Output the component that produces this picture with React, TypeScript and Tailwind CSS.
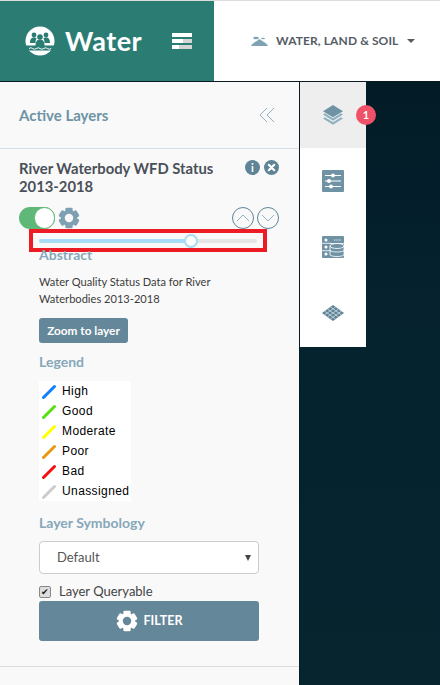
import React from "react";

const FONT = { fontFamily: '"Lato", "Noto Sans", sans-serif' };

function Gear({ size, color, hole }: { size: number; color: string; hole: string }) {
  const teeth = [0, 60, 120];
  return (
    <svg width={size} height={size} viewBox="0 0 24 24">
      {teeth.map((a) => (
        <rect key={a} x="8" y="0.8" width="8" height="22.4" rx="1.500" fill={color} transform={`rotate(${a} 12 12)`} />
      ))}
      <circle cx="12" cy="12" r="8.800" fill={color} />
      <circle cx="12" cy="12" r="4.600" fill={hole} />
    </svg>
  );
}

function Logo() {
  return (
    <svg width="30" height="30" viewBox="0 0 30 30">
      <circle cx="15" cy="15" r="14.500" fill="#fff" />
      <g fill="#2b7d74">
        <circle cx="9" cy="9" r="2.400" />
        <circle cx="21" cy="9" r="2.400" />
        <path d="M5 17c0-4 1.500-5.500 4-5.500 1.200 0 2 .3 2.700 1-.9 1-1.200 2.500-1.200 4.500z" />
        <path d="M25 17c0-4-1.500-5.500-4-5.500-1.200 0-2 .3-2.700 1 .9 1 1.200 2.500 1.200 4.500z" />
        <circle cx="15" cy="11" r="2.800" />
        <path d="M10.500 20c0-4.500 1.500-6.500 4.500-6.500s4.500 2 4.500 6.500z" />
        <path d="M0.500 19.500h29a14.500 14.500 0 0 1-2 5H2.500a14.500 14.500 0 0 1-2-5z" />
      </g>
      <path d="M4 22.500q2-1.500 3.700 0t3.700 0 3.700 0 3.700 0 3.700 0 3.700 0" fill="none" stroke="#fff" strokeWidth="1" />
    </svg>
  );
}

function Layers() {
  return (
    <svg width="22" height="20" viewBox="0 0 22 20">
      <path d="M11 0l10 6.200-10 6-10-6z" fill="#6f93a5" />
      <path d="M1 9.500l2-1.200 8 4.900 8-4.900 2 1.200-10 6.200z" fill="#8fb0c0" />
      <path d="M1 13.500l2-1.200 8 4.900 8-4.900 2 1.200-10 6.200z" fill="#8fb0c0" />
    </svg>
  );
}

function Sliders() {
  return (
    <svg width="22" height="22" viewBox="0 0 22 22">
      <rect width="22" height="22" rx="1" fill="#6f93a5" />
      <g stroke="#fff" strokeWidth="1">
        <path d="M3 5.500h16M3 11h16M3 16.500h16" />
      </g>
      <g fill="#fff">
        <circle cx="11" cy="5.500" r="2" />
        <circle cx="7" cy="11" r="2" />
        <circle cx="9" cy="16.500" r="2" />
      </g>
    </svg>
  );
}

function Database() {
  return (
    <svg width="22" height="22" viewBox="0 0 22 22">
      <rect width="22" height="22" rx="1" fill="#6f93a5" />
      <g stroke="#fff" strokeWidth="0.800" fill="none">
        <path d="M0 7.300h9M0 14.700h9M8 7.500h14" />
        <ellipse cx="15" cy="10" rx="7" ry="2.500" />
        <path d="M8 10v9M22 10v9M8 14.500c2 2 12 2 14 0M8 19c2 2 12 2 14 0" />
        <path d="M12 4h7" strokeDasharray="1 0.600" />
      </g>
      <g fill="#fff">
        <circle cx="4" cy="4" r="1.500" />
        <circle cx="4" cy="11" r="1.500" />
        <circle cx="4" cy="18" r="1.500" />
      </g>
    </svg>
  );
}

function Grid() {
  return (
    <svg width="22" height="16" viewBox="0 0 22 16">
      <path d="M11 0l11 8-11 8-11-8z" fill="#5f8496" />
      <g stroke="#cfdce3" strokeWidth="0.800">
        <path d="M5.500 4l11 8M2.500 6l11 8M8.500 2l11 8M16.500 4l-11 8M19.500 6l-11 8M13.500 2l-11 8" />
      </g>
    </svg>
  );
}

function Legend({ color, label }: { color: string; label: string }) {
  return (
    <div className="flex h-5 items-center">
      <svg width="16" height="16" viewBox="0 0 16 16" className="ml-[2px]">
        <path d="M2.500 14.500L13.500 3.500" stroke={color} strokeWidth="3" strokeLinecap="round" />
      </svg>
      <span className="ml-[5px] text-[12px] tracking-[0.4px] text-black" style={{ fontFamily: '"Liberation Sans", sans-serif' }}>
        {label}
      </span>
    </div>
  );
}

function Circle({ up }: { up?: boolean }) {
  return (
    <span className="flex h-[22px] w-[22px] items-center justify-center rounded-full border border-[#5f8496]">
      <svg width="14" height="8" viewBox="0 0 14 8">
        <path d={up ? "M1 7l6-6 6 6" : "M1 1l6 6 6-6"} fill="none" stroke="#8fb0c0" strokeWidth="1" />
      </svg>
    </span>
  );
}

const heading = "text-[14px] font-bold text-[#86a8b9]";

export default function App() {
  return (
    <div className="flex h-[685px] w-[440px] flex-col overflow-hidden bg-[#06252f]" style={FONT}>
      <header className="flex h-[82px] shrink-0 border-t border-b border-t-[#dddddd] border-b-[#0a1a22] bg-white">
        <div className="flex w-[214px] items-center bg-[#2b7d74] pl-[25px]">
          <Logo />
          <span className="ml-[10px] text-[27px] font-bold tracking-[0.5px] text-white">Water</span>
          <span className="ml-[30px] flex w-5 flex-col gap-[2px]">
            <span className="h-1 bg-white" />
            <span className="h-1 bg-[linear-gradient(100deg,#fff_55%,#d5d5d5_55%)]" />
            <span className="h-1 bg-[linear-gradient(100deg,#fff_35%,#d5d5d5_35%)]" />
          </span>
        </div>
        <div className="flex flex-1 items-center pl-[37px]">
          <svg width="17" height="10" viewBox="0 0 17 10">
            <path d="M0 10c1-2 3-3.500 5-4.500L8.500 3 12 5.500c2 1 4 2.500 5 4.500z" fill="#7fa3b5" />
            <ellipse cx="5" cy="2" rx="2.800" ry="1.300" fill="#7fa3b5" />
            <ellipse cx="12" cy="2.500" rx="2" ry="0.800" fill="#7fa3b5" />
          </svg>
          <span className="ml-2 text-[12px] font-bold tracking-[0.1px] text-[#555c66]">WATER, LAND &amp; SOIL</span>
          <span className="ml-[9px] h-0 w-0 border-x-[4px] border-t-[4px] border-x-transparent border-t-[#555c66]" />
        </div>
      </header>
      <div className="flex min-h-0 flex-1">
        <aside className="flex w-[300px] shrink-0 flex-col border-r border-[#0a1a22] bg-[#f9f9f9]">
          <div className="flex h-[67px] shrink-0 items-center justify-between border-b border-[#d5e0e6] pl-[19px] pr-[24px]">
            <span className="text-[15px] font-bold text-[#6d93a6]">Active Layers</span>
            <svg width="16" height="16" viewBox="0 0 16 16">
              <path d="M8 1L1 8l7 7M15 1L8 8l7 7" fill="none" stroke="#8fb0c0" strokeWidth="1" />
            </svg>
          </div>
          <div className="flex flex-1 flex-col border-b border-[#dddddd] pl-[19px] pr-[20px]">
            <div className="mt-[10px] flex items-start justify-between">
              <h2 className="w-[210px] text-[14.800px] leading-[18px] font-bold text-[#4a5058]">River Waterbody WFD Status 2013-2018</h2>
              <div className="mt-[1px] flex gap-[4px]">
                <span className="flex h-[15px] w-[15px] items-center justify-center rounded-full bg-[#5f8496] text-[11px] leading-none font-bold text-white">i</span>
                <svg width="15" height="15" viewBox="0 0 15 15">
                  <circle cx="7.500" cy="7.500" r="7.500" fill="#5f8496" />
                  <path d="M4.800 4.800l5.400 5.400M10.200 4.800l-5.400 5.400" stroke="#fff" strokeWidth="2.200" strokeLinecap="round" />
                </svg>
              </div>
            </div>
            <div className="mt-[12px] flex items-center justify-between">
              <div className="flex items-center gap-[3px]">
                <span className="flex h-[22px] w-9 items-center justify-end rounded-full bg-[#5fb878]">
                  <span className="h-[22px] w-[21px] rounded-full border border-[#5fb878] bg-white" />
                </span>
                <Gear size={22} color="#7fa0b2" hole="#f9f9f9" />
              </div>
              <div className="flex gap-[3px]">
                <Circle up />
                <Circle />
              </div>
            </div>
            <div className="ml-[10px] flex h-[23px] w-[238px] shrink-0 items-center border-4 border-[#ed1c24] px-[6px]">
              <div className="relative h-1 w-full rounded-full bg-[#e6e6e6]">
                <div className="h-1 w-[150px] rounded-full bg-[#a6dcf5]" />
                <span className="absolute top-[-5px] left-[145px] h-[14px] w-[14px] rounded-full border-2 border-[#a6dcf5] bg-white" />
              </div>
            </div>
            <div className="ml-[20px]">
              <div className={`${heading} mt-[-6px] leading-[18px]`}>Abstract</div>
              <p className="mt-[9px] w-[190px] text-[11.100px] leading-[17px] text-[#3c3c3c]">Water Quality Status Data for River Waterbodies 2013-2018</p>
              <button className="mt-[11px] flex h-[25px] w-[89px] items-center justify-center rounded-[3px] bg-[#64879a] text-[11.800px] font-bold text-white">
                Zoom to layer
              </button>
              <div className={`${heading} mt-[10px] leading-[18px]`}>Legend</div>
              <div className="mt-[10px] w-[92px] bg-white">
                <Legend color="#0f7fff" label="High" />
                <Legend color="#55e00f" label="Good" />
                <Legend color="#ffff00" label="Moderate" />
                <Legend color="#e8980f" label="Poor" />
                <Legend color="#f50f0f" label="Bad" />
                <Legend color="#cccccc" label="Unassigned" />
              </div>
              <div className={`${heading} mt-[13px] leading-[18px]`}>Layer Symbology</div>
              <div className="relative mt-[9px] flex h-[33px] w-[220px] items-center rounded-[4px] border border-[#cccccc] bg-white pl-[17px] text-[13px] text-[#555555]">
                Default
                <span className="absolute top-[13px] right-[7px] h-0 w-0 border-x-[3.500px] border-t-[6px] border-x-transparent border-t-[#444444]" />
              </div>
              <label className="mt-[11px] flex h-[13px] items-center text-[13px] text-[#444444]">
                <span className="flex h-[12px] w-[12px] items-center justify-center rounded-[2px] border border-[#888888] bg-[#dddddd] text-[9px] leading-none text-[#222222]">✔</span>
                <span className="ml-[8px]">Layer Queryable</span>
              </label>
              <button className="mt-[3px] flex h-10 w-[220px] items-center justify-center rounded-[3px] bg-[#64879a] text-[12.500px] font-bold text-white">
                <Gear size={22} color="#ffffff" hole="#64879a" />
                <span className="ml-[6px]">FILTER</span>
              </button>
            </div>
          </div>
          <div className="h-[18px] shrink-0" />
        </aside>
        <div className="flex-1 bg-[linear-gradient(180deg,#021b27,#05232f_45%,#06252f)]">
          <nav className="flex h-[265px] w-[66px] flex-col bg-white">
            <div className="relative flex h-[66px] items-center justify-center bg-[#eeeeee]">
              <Layers />
              <span className="absolute top-[23px] left-[56px] flex h-5 w-5 items-center justify-center rounded-full bg-[#ef5268] text-[11px] font-bold text-white">1</span>
            </div>
            <div className="flex h-[66px] items-center justify-center"><Sliders /></div>
            <div className="flex h-[66px] items-center justify-center"><Database /></div>
            <div className="flex h-[66px] items-center justify-center"><Grid /></div>
          </nav>
        </div>
      </div>
    </div>
  );
}
